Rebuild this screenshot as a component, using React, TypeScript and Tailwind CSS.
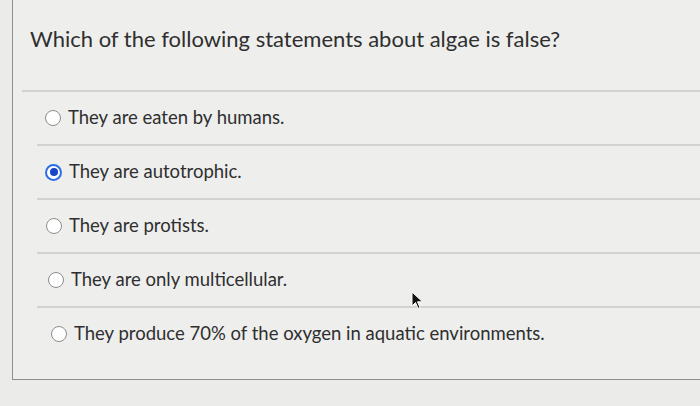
import React from 'react';

// the photo is a little skewed, so each row sits a bit further right
const options = [
  { text: 'They are eaten by humans.', pad: 'pl-[8px]' },
  { text: 'They are autotrophic.', pad: 'pl-[8px]', checked: true },
  { text: 'They are protists.', pad: 'pl-[9px]' },
  { text: 'They are only multicellular.', pad: 'pl-[11px]' },
  { text: 'They produce 70% of the oxygen in aquatic environments.', pad: 'pl-[14px]' },
];

function Radio({ checked }: { checked?: boolean }) {
  if (checked) {
    return (
      <span className="flex size-[17px] shrink-0 items-center justify-center rounded-full border-[2.5px] border-[#2b6de8] bg-white">
        <span className="size-[8px] rounded-full bg-[#1846c9]" />
      </span>
    );
  }
  return <span className="size-[16px] shrink-0 rounded-full border-[1.5px] border-[#8d8d8d] bg-white" />;
}

export default function App() {
  return (
    <div className="relative h-[406px] w-[700px] overflow-hidden bg-[#ebebea] font-['Lato',sans-serif] text-[#2f2f2f]">
      <div className="ml-[12px] h-[380px] border-b-[1.5px] border-l-[1.5px] border-[#8f8f8f] bg-[#eeeeed]">
        <h1 className="h-[80px] pl-[17px] pt-[25px] text-[22px] font-normal leading-[28px] text-[#2f2f2f]">
          Which of the following statements about algae is false?
        </h1>
        <div className="ml-[9px] border-b-2 border-[#d2d2d0] pb-[10px]" />
        {options.map((o) => (
          <div key={o.text} className="ml-[24px] border-b-2 border-[#d2d2d0] last:border-b-0">
            <div className={`flex h-[52px] items-center gap-[7px] text-[18.5px] ${o.pad}`}>
              <Radio checked={o.checked} />
              <span>{o.text}</span>
            </div>
          </div>
        ))}
      </div>
      {/* mouse pointer */}
      <svg className="absolute left-[411px] top-[291px]" width="14" height="20" viewBox="0 0 14 20">
        <path d="M1 1 L1 15 L4.5 11.5 L7 17.5 L9 16.5 L6.5 10.8 L11.5 10.8 Z" fill="#111" stroke="#fff" strokeWidth="1" />
      </svg>
    </div>
  );
}
